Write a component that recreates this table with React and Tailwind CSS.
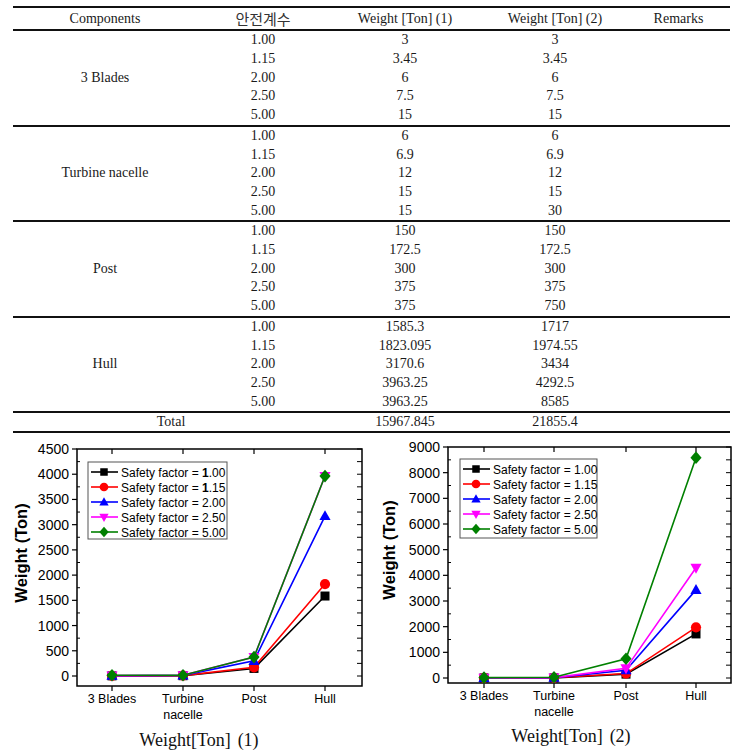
import React from 'react';

const groups = [
  { name: '3 Blades', rows: [['1.00', '3', '3'], ['1.15', '3.45', '3.45'], ['2.00', '6', '6'], ['2.50', '7.5', '7.5'], ['5.00', '15', '15']] },
  { name: 'Turbine nacelle', rows: [['1.00', '6', '6'], ['1.15', '6.9', '6.9'], ['2.00', '12', '12'], ['2.50', '15', '15'], ['5.00', '15', '30']] },
  { name: 'Post', rows: [['1.00', '150', '150'], ['1.15', '172.5', '172.5'], ['2.00', '300', '300'], ['2.50', '375', '375'], ['5.00', '375', '750']] },
  { name: 'Hull', rows: [['1.00', '1585.3', '1717'], ['1.15', '1823.095', '1974.55'], ['2.00', '3170.6', '3434'], ['2.50', '3963.25', '4292.5'], ['5.00', '3963.25', '8585']] },
];

const series = [
  { label: '1.00', color: '#000000', marker: 'square' },
  { label: '1.15', color: '#ff0000', marker: 'circle' },
  { label: '2.00', color: '#0000ff', marker: 'up' },
  { label: '2.50', color: '#ff00ff', marker: 'down' },
  { label: '5.00', color: '#008000', marker: 'diamond' },
];

const data1 = [
  [3, 6, 150, 1585.3],
  [3.45, 6.9, 172.5, 1823.095],
  [6, 12, 300, 3170.6],
  [7.5, 15, 375, 3963.25],
  [15, 15, 375, 3963.25],
];

const data2 = [
  [3, 6, 150, 1717],
  [3.45, 6.9, 172.5, 1974.55],
  [6, 12, 300, 3434],
  [7.5, 15, 375, 4292.5],
  [15, 30, 750, 8585],
];

const cols = 'grid grid-cols-[184px_132px_152px_148px_101px]';

const Marker = ({ type, x, y, s, color }) => {
  if (type === 'square') return <rect x={x - s / 2} y={y - s / 2} width={s} height={s} fill={color} />;
  if (type === 'circle') return <circle cx={x} cy={y} r={s / 2 + 0.6} fill={color} />;
  if (type === 'up') return <polygon points={`${x},${y - s * 0.65} ${x - s * 0.62},${y + s * 0.45} ${x + s * 0.62},${y + s * 0.45}`} fill={color} />;
  if (type === 'down') return <polygon points={`${x},${y + s * 0.65} ${x - s * 0.62},${y - s * 0.45} ${x + s * 0.62},${y - s * 0.45}`} fill={color} />;
  return <polygon points={`${x},${y - s * 0.7} ${x + s * 0.62},${y} ${x},${y + s * 0.7} ${x - s * 0.62},${y}`} fill={color} />;
};

const Chart = ({ data, max, step, minor, box, zero, xs, tickRight, label, legend, boldOne }) => {
  const top = box.t;
  const yPix = (v) => zero - (v * (zero - top)) / max;
  const majors = [];
  for (let v = 0; v <= max; v += step) majors.push(v);
  const minors = [];
  for (let v = minor; v < max; v += step) minors.push(v);
  const fine = [];
  for (let v = 0; v <= max; v += minor) fine.push(v);

  return (
    <svg width="370" height="290" className="block" style={{ fontFamily: '"Liberation Sans", Arial, sans-serif' }}>
      {/* axes box */}
      <rect x={box.l} y={box.t} width={box.r - box.l} height={box.b - box.t} fill="none" stroke="#000" strokeWidth="1.5" />
      {majors.map((v) => (
        <g key={v}>
          <line x1={box.l - 5} x2={box.l} y1={yPix(v)} y2={yPix(v)} stroke="#000" strokeWidth="1.2" />
          <text x={tickRight} y={yPix(v) + 5} textAnchor="end" fontSize="14" fill="#000">{v}</text>
        </g>
      ))}
      {minors.map((v) => (
        <line key={v} x1={box.l} x2={box.l + 3} y1={yPix(v)} y2={yPix(v)} stroke="#000" strokeWidth="1" />
      ))}
      {fine.map((v) => (
        <line key={v} x1={box.r - 5} x2={box.r} y1={yPix(v)} y2={yPix(v)} stroke="#000" strokeWidth="1" />
      ))}
      {xs.map((x) => (
        <g key={x}>
          <line x1={x} x2={x} y1={box.t} y2={box.t + 5} stroke="#000" strokeWidth="1.2" />
          <line x1={x} x2={x} y1={box.b} y2={box.b + 5} stroke="#000" strokeWidth="1.2" />
        </g>
      ))}
      <text x={xs[0]} y={box.b + 17} textAnchor="middle" fontSize="12.5" fill="#000">3 Blades</text>
      <text x={xs[1]} y={box.b + 17} textAnchor="middle" fontSize="12.5" fill="#000">Turbine</text>
      <text x={xs[1]} y={box.b + 33} textAnchor="middle" fontSize="12.5" fill="#000">nacelle</text>
      <text x={xs[2]} y={box.b + 17} textAnchor="middle" fontSize="12.5" fill="#000">Post</text>
      <text x={xs[3]} y={box.b + 17} textAnchor="middle" fontSize="12.5" fill="#000">Hull</text>
      <text x={label.x} y={label.y} transform={`rotate(-90 ${label.x} ${label.y})`} textAnchor="middle" dominantBaseline="central" fontSize="16.5" fontWeight="bold" fill="#000">
        Weight (Ton)
      </text>

      {/* series */}
      {series.map((s, i) => (
        <g key={s.label}>
          <polyline points={data[i].map((v, j) => `${xs[j]},${yPix(v)}`).join(' ')} fill="none" stroke={s.color} strokeWidth="1.6" />
          {data[i].map((v, j) => (
            <Marker key={j} type={s.marker} x={xs[j]} y={yPix(v)} s={9} color={s.color} />
          ))}
        </g>
      ))}

      {/* legend */}
      <rect x={legend.x} y={legend.y} width={legend.w} height={legend.h} fill="#fff" stroke="#555" strokeWidth="1" />
      {series.map((s, i) => {
        const y = legend.row + i * 15;
        return (
          <g key={s.label}>
            <line x1={legend.x + 3} x2={legend.x + 30} y1={y} y2={y} stroke={s.color} strokeWidth="1.6" />
            <Marker type={s.marker} x={legend.x + 16} y={y} s={7.5} color={s.color} />
            <text x={legend.x + 33} y={y + 4.5} fontSize="12" fill="#000">
              Safety factor = {boldOne && s.label.startsWith('1') ? (
                <><tspan fontWeight="bold">1</tspan>{s.label.slice(1)}</>
              ) : s.label}
            </text>
          </g>
        );
      })}
    </svg>
  );
};

export default function App() {
  return (
    <div className="w-[740px] h-[753px] bg-white overflow-hidden">
      {/* Table */}
      <div className="pt-[6px]">
        <div className="ml-[13px] w-[717px] border-t-2 border-b-2 border-[#111] text-[14px] text-[#1a1a1a] font-['Liberation_Serif','Noto_Sans_CJK_KR',serif] leading-none">
          <div className={`${cols} h-[23px] items-center text-center border-b-2 border-[#111]`}>
            <div>Components</div>
            <div className="font-['Noto_Sans_CJK_KR',sans-serif] text-[15px] text-[#333] leading-none">안전계수</div>
            <div>Weight [Ton] (1)</div>
            <div>Weight [Ton] (2)</div>
            <div className="pr-[2px]">Remarks</div>
          </div>
          {groups.map((g) => (
            <div key={g.name} className={`${cols} grid-rows-5 h-[95.5px] text-center border-b-2 border-[#111]`}>
              <div className="row-span-5 flex items-center justify-center">{g.name}</div>
              {g.rows.map((r) => (
                <React.Fragment key={r[0]}>
                  <div className="flex items-center justify-center">{r[0]}</div>
                  <div className="flex items-center justify-center">{r[1]}</div>
                  <div className="flex items-center justify-center">{r[2]}</div>
                  <div />
                </React.Fragment>
              ))}
            </div>
          ))}
          <div className={`${cols} h-[18px] items-center text-center`}>
            <div className="col-span-2">Total</div>
            <div>15967.845</div>
            <div>21855.4</div>
            <div />
          </div>
        </div>
      </div>

      {/* Charts */}
      <div className="flex pt-[7px]">
        <div className="w-[370px] flex flex-col">
          <Chart
            data={data1}
            max={4500}
            step={500}
            minor={250}
            box={{ l: 77, r: 362, t: 9, b: 246 }}
            zero={236}
            xs={[112, 183, 254, 325]}
            tickRight={69}
            label={{ x: 21, y: 113 }}
            legend={{ x: 88, y: 22, w: 139, h: 77, row: 32 }}
            boldOne
          />
          <div className="h-[20px] leading-[20px] pl-[28px] text-center text-[18px] text-[#111] font-['Liberation_Serif',serif]">
            Weight[Ton]<span className="ml-[7px]">(1)</span>
          </div>
        </div>
        <div className="w-[370px] flex flex-col">
          <Chart
            data={data2}
            max={9000}
            step={1000}
            minor={500}
            box={{ l: 78, r: 361, t: 7, b: 243 }}
            zero={238}
            xs={[114, 184, 256, 326]}
            tickRight={70}
            label={{ x: 19, y: 110 }}
            legend={{ x: 90, y: 19, w: 137, h: 79, row: 29 }}
          />
          <div className="mt-[-4px] h-[20px] leading-[20px] pl-[32px] text-center text-[18px] text-[#111] font-['Liberation_Serif',serif]">
            Weight[Ton]<span className="ml-[7px]">(2)</span>
          </div>
        </div>
      </div>
    </div>
  );
}
